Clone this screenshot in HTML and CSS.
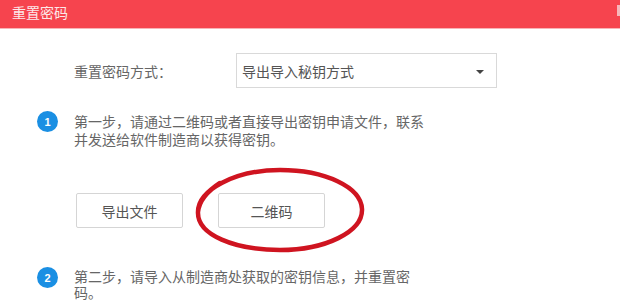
FILE: index.html
```html
<!DOCTYPE html>
<html lang="zh-CN">
<head>
<meta charset="utf-8">
<title>重置密码</title>
<link rel="stylesheet" href="styles.css">
</head>
<body>
<div class="dialog">
  <div class="header">
    <span class="title">重置密码</span>
    <span class="close"></span>
  </div>
  <div class="body">
    <div class="form-row">
      <span class="label">重置密码方式：</span>
      <div class="select">
        <span class="select-text">导出导入秘钥方式</span>
        <span class="caret"></span>
      </div>
    </div>
    <div class="step step-one">
      <span class="badge">1</span>
      <p class="step-text">第一步，请通过二维码或者直接导出密钥申请文件，联系并发送给软件制造商以获得密钥。</p>
    </div>
    <div class="buttons">
      <button class="btn">导出文件</button>
      <button class="btn btn-circled">二维码
        <svg class="circle-mark" width="172" height="88" viewBox="0 0 172 88">
          <path d="M4 46 C 4 24, 41 4, 86 4 C 131 4, 167 21, 168 43 C 169 66, 131 84, 86 84 C 41 84, 3 69, 4 46 C 5 36, 12 26, 26 17" fill="none" stroke="#cf1420" stroke-width="4.5" stroke-linecap="round"/>
        </svg>
      </button>
    </div>
    <div class="step step-two">
      <span class="badge">2</span>
      <p class="step-text step-text-tight">第二步，请导入从制造商处获取的密钥信息，并重置密码。</p>
    </div>
  </div>
</div>
</body>
</html>
```
FILE: styles.css
```css
* { box-sizing: border-box; }
html, body { margin: 0; padding: 0; background: #ffffff; overflow: hidden; }
body {
  font-family: "Noto Sans CJK SC", "Noto Sans", sans-serif;
  font-size: 14px;
  color: #666666;
  width: 620px;
  height: 302px;
}
.dialog { width: 620px; }
.header {
  position: relative;
  height: 29px;
  background: #f6444e;
  border-bottom: 1px solid #f8b3b7;
  padding-left: 12px;
  display: flex;
  align-items: center;
}
.title {
  color: #fde8e9;
  font-size: 14px;
  line-height: 20px;
  margin-top: -5px;
}
.close {
  position: absolute;
  right: 0;
  top: 5px;
  width: 3px;
  height: 11px;
  background: #f7b7ba;
}
.body { padding-left: 74px; }
.form-row {
  display: flex;
  align-items: center;
  margin-top: 24px;
}
.label {
  width: 162px;
  color: #666666;
  line-height: 20px;
}
.select {
  width: 261px;
  height: 35px;
  border: 1px solid #d9d9d9;
  display: flex;
  align-items: center;
  justify-content: space-between;
  padding: 0 12px 0 5px;
  color: #555555;
}
.caret {
  width: 0; height: 0;
  border-left: 4px solid transparent;
  border-right: 4px solid transparent;
  border-top: 4px solid #444444;
  margin-top: 2px;
}
.step {
  display: flex;
  align-items: flex-start;
  margin-left: -37px;
}
.step-one { margin-top: 24px; }
.step-two { margin-top: 40px; }
.badge {
  width: 21px;
  height: 21px;
  border-radius: 50%;
  background: #1a8fe3;
  color: #ffffff;
  font-family: "Liberation Sans", Arial, sans-serif;
  font-size: 11px;
  font-weight: bold;
  display: flex;
  align-items: center;
  justify-content: center;
  margin-top: -1px;
  margin-right: 16px;
  flex: none;
}
.step-text {
  margin: 0;
  width: 358px;
  line-height: 18px;
  color: #666666;
}
.step-text-tight { line-height: 16px; }
.buttons {
  display: flex;
  gap: 35px;
  margin-top: 45px;
  margin-left: 2px;
}
.btn {
  position: relative;
  width: 107px;
  height: 35px;
  background: #ffffff;
  border: 1px solid #d5d5d5;
  border-radius: 2px;
  font-family: "Noto Sans CJK SC", "Noto Sans", sans-serif;
  font-size: 14px;
  color: #555555;
  padding: 0;
}
.circle-mark {
  position: absolute;
  left: -25px;
  top: -28px;
  pointer-events: none;
}
```
